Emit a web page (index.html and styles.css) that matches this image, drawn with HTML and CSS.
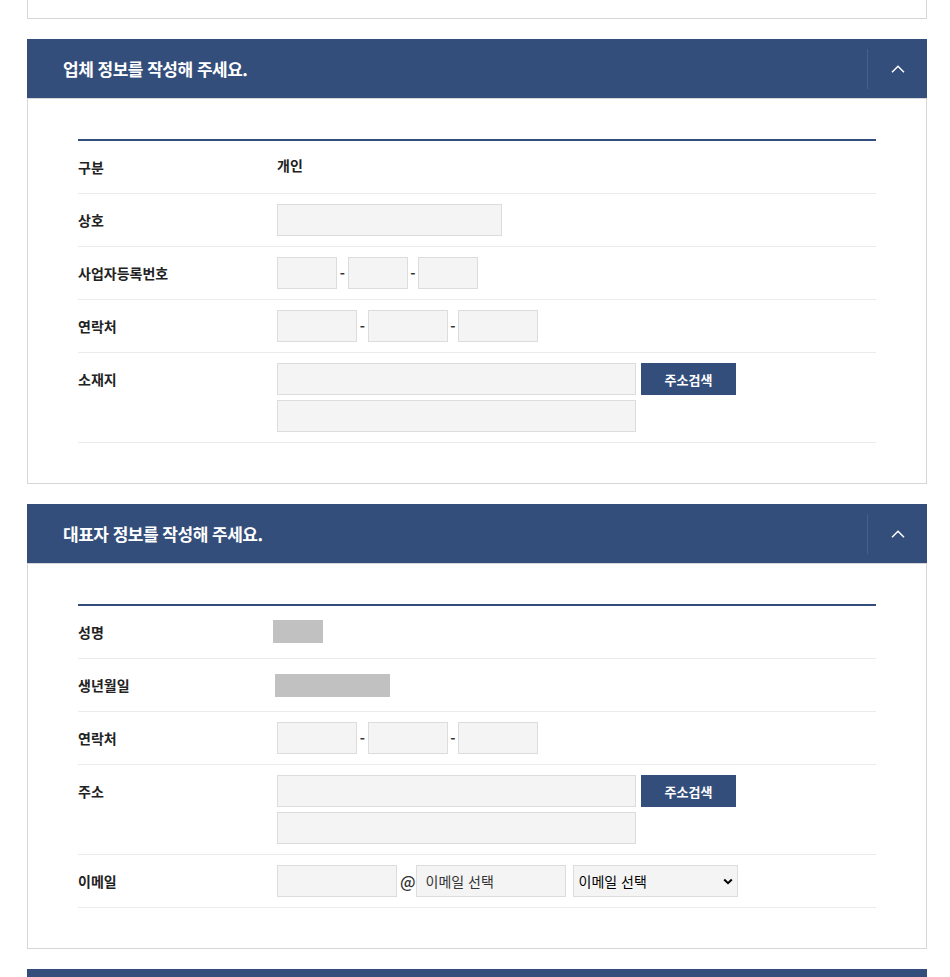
FILE: index.html
```html
<!DOCTYPE html>
<html lang="ko">
<head>
    <meta charset="UTF-8">
    <meta name="viewport" content="width=device-width, initial-scale=1.0">
    <title>업체 정보 입력</title>
    <link rel="stylesheet" href="styles.css">
</head>
<body>
    <div class="page">
        <div class="box box-prev"></div>

        <section class="section">
            <div class="section-head">
                <h2>업체 정보를 작성해 주세요.</h2>
                <button class="toggle" type="button" aria-label="접기">
                    <svg width="14" height="8" viewBox="0 0 14 8"><path d="M1 7.2 L7 1.2 L13 7.2" fill="none" stroke="#fff" stroke-width="1.5"/></svg>
                </button>
            </div>
            <div class="box">
                <div class="form-table">
                    <div class="row">
                        <div class="th">구분</div>
                        <div class="td"><span class="value">개인</span></div>
                    </div>
                    <div class="row">
                        <div class="th">상호</div>
                        <div class="td"><input type="text" class="w225"></div>
                    </div>
                    <div class="row">
                        <div class="th">사업자등록번호</div>
                        <div class="td">
                            <input type="text" class="w60"><span class="dash">-</span><input type="text" class="w60"><span class="dash">-</span><input type="text" class="w60">
                        </div>
                    </div>
                    <div class="row">
                        <div class="th">연락처</div>
                        <div class="td">
                            <input type="text" class="w80"><span class="dash">-</span><input type="text" class="w80"><span class="dash">-</span><input type="text" class="w80">
                        </div>
                    </div>
                    <div class="row">
                        <div class="th">소재지</div>
                        <div class="td">
                            <div class="addr-line">
                                <input type="text" class="w359"><button class="btn-search" type="button">주소검색</button>
                            </div>
                            <div class="addr-line">
                                <input type="text" class="w359">
                            </div>
                        </div>
                    </div>
                </div>
            </div>
        </section>

        <section class="section">
            <div class="section-head">
                <h2>대표자 정보를 작성해 주세요.</h2>
                <button class="toggle" type="button" aria-label="접기">
                    <svg width="14" height="8" viewBox="0 0 14 8"><path d="M1 7.2 L7 1.2 L13 7.2" fill="none" stroke="#fff" stroke-width="1.5"/></svg>
                </button>
            </div>
            <div class="box">
                <div class="form-table">
                    <div class="row">
                        <div class="th">성명</div>
                        <div class="td"><span class="masked mask-name"></span></div>
                    </div>
                    <div class="row">
                        <div class="th">생년월일</div>
                        <div class="td"><span class="masked mask-birth"></span></div>
                    </div>
                    <div class="row">
                        <div class="th">연락처</div>
                        <div class="td">
                            <input type="text" class="w80"><span class="dash">-</span><input type="text" class="w80"><span class="dash">-</span><input type="text" class="w80">
                        </div>
                    </div>
                    <div class="row">
                        <div class="th">주소</div>
                        <div class="td">
                            <div class="addr-line">
                                <input type="text" class="w359"><button class="btn-search" type="button">주소검색</button>
                            </div>
                            <div class="addr-line">
                                <input type="text" class="w359">
                            </div>
                        </div>
                    </div>
                    <div class="row">
                        <div class="th">이메일</div>
                        <div class="td">
                            <input type="text" class="w120"><span class="at">@</span><input type="text" class="w150" placeholder="이메일 선택"><select class="email-select">
                                <option>이메일 선택</option>
                                <option>naver.com</option>
                                <option>gmail.com</option>
                                <option>daum.net</option>
                            </select>
                        </div>
                    </div>
                </div>
            </div>
        </section>

        <section class="section">
            <div class="section-head"></div>
        </section>
    </div>
</body>
</html>
```

FILE: styles.css
```css
body {
    margin: 0;
    padding: 0;
    background: #fff;
    color: #222;
    font-family: "Noto Sans CJK KR", "Noto Sans", sans-serif;
    font-size: 14px;
}

.page {
    width: 900px;
    margin-left: 27px;
}

.box {
    border: 1px solid #d6d6d6;
    padding: 40px 50px;
}

.box-prev {
    height: 18px;
    padding: 0;
    border-top: none;
}

.section {
    margin-top: 20px;
}

.section-head {
    height: 59px;
    background: #344e7b;
    display: flex;
    align-items: center;
    justify-content: space-between;
}

.section-head h2 {
    margin: -1px 0 0 36px;
    color: #fff;
    font-size: 17px;
    font-weight: 700;
    letter-spacing: -0.5px;
}

.toggle {
    width: 60px;
    height: 40px;
    padding: 0;
    background: none;
    border: none;
    border-left: 1px solid #485f88;
    display: flex;
    align-items: center;
    justify-content: center;
    cursor: pointer;
}

.form-table {
    border-top: 2px solid #344e7b;
}

.row {
    display: flex;
    border-bottom: 1px solid #ebebeb;
}

.th {
    width: 199px;
    padding: 10px 0;
    line-height: 32px;
    font-weight: 700;
    color: #222;
}

.td {
    flex: 1;
    padding: 10px 0;
    display: flex;
    flex-direction: column;
    justify-content: center;
    min-height: 32px;
}

.td > input,
.td > .dash,
.td > .at,
.td > select {
    flex: none;
}

.row .td:has(> input) {
    flex-direction: row;
    justify-content: flex-start;
    align-items: center;
}

.value {
    font-weight: 700;
    line-height: 28px;
    padding-bottom: 4px;
}

input[type="text"] {
    box-sizing: border-box;
    height: 32px;
    margin: 0;
    padding: 0 9px;
    border: 1px solid #dcdcdc;
    background: #f4f4f4;
    font-family: inherit;
    font-size: 14px;
    color: #333;
    outline: none;
}

input::placeholder {
    color: #333;
}

.w60 { width: 60px; }
.w80 { width: 80px; }
.w120 { width: 120px; }
.w150 { width: 150px; }
.w225 { width: 225px; }
.w359 { width: 359px; }

.dash {
    width: 10.5px;
    text-align: center;
    line-height: 32px;
    font-size: 14px;
    font-weight: 700;
    color: #333;
}

.at {
    margin: 0 0 0 3px;
    font-size: 16px;
    font-weight: 500;
    color: #333;
    line-height: 32px;
}

.addr-line {
    display: flex;
}

.addr-line + .addr-line {
    margin-top: 5px;
}

.btn-search {
    width: 95px;
    height: 32px;
    margin-left: 5px;
    border: none;
    background: #344e7b;
    color: #fff;
    font-family: inherit;
    font-size: 13px;
    font-weight: 700;
    cursor: pointer;
}

.email-select {
    box-sizing: border-box;
    width: 165px;
    height: 32px;
    margin-left: 7px;
    padding: 0 20px 0 5px;
    border: 1px solid #dcdcdc;
    background: #f4f4f4 url("data:image/svg+xml,%3Csvg xmlns='http://www.w3.org/2000/svg' width='10' height='7' viewBox='0 0 10 7'%3E%3Cpath d='M1.2 1.5 L5 5.2 L8.8 1.5' fill='none' stroke='%23000' stroke-width='2'/%3E%3C/svg%3E") no-repeat right 4px center;
    -webkit-appearance: none;
    appearance: none;
    font-family: inherit;
    font-size: 14px;
    color: #000;
    border-radius: 0;
}

.masked {
    display: block;
    height: 23px;
    background: #c1c1c1;
}

.mask-name {
    width: 50px;
    margin: -2px 0 0 -4px;
}

.mask-birth {
    width: 115px;
    margin: 1px 0 0 -2px;
}
```
